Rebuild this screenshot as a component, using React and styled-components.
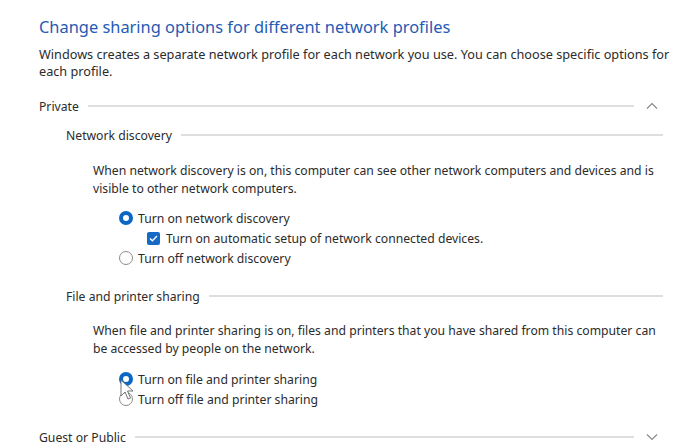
import React from 'react';
import styled, { createGlobalStyle } from 'styled-components';

const GlobalStyle = createGlobalStyle`
  body {
    margin: 0;
    background: #fff;
    font-family: 'Noto Sans', 'Liberation Sans', sans-serif;
    color: #2b2b2b;
  }
`;

const Page = styled.div`
  position: relative;
  width: 691px;
  height: 448px;
  overflow: hidden;
  padding: 15px 0 0 39px;
  box-sizing: border-box;
`;

const Title = styled.h1`
  margin: 0;
  font-size: 16.4px;
  font-weight: 400;
  color: #1f5bb4;
  line-height: 24px;
`;

const Intro = styled.p`
  margin: 7px 0 0;
  width: 645px;
  font-size: 12.7px;
  line-height: 17px;
`;

const Header = styled.div`
  display: flex;
  align-items: center;
  height: 20px;
  margin-top: ${({ top }) => top}px;
  margin-left: ${({ indent }) => indent}px;
  width: ${({ width }) => width}px;
  font-size: 12.2px;
`;

const Rule = styled.div`
  flex: 1;
  height: 2px;
  background: #dedede;
  margin-left: 9px;
`;

const Chevron = styled.svg`
  width: 12px;
  height: 8px;
  margin-left: 12px;
  flex: none;
`;

const Body = styled.p`
  margin: ${({ top }) => top}px 0 0 54px;
  width: 580px;
  font-size: 12.2px;
  line-height: 17.5px;
`;

const Options = styled.div`
  display: flex;
  flex-direction: column;
  margin: ${({ top }) => top}px 0 0 80px;
`;

const Option = styled.label`
  display: flex;
  align-items: center;
  height: 20px;
  font-size: 12.2px;
  margin-left: ${({ indent }) => indent || 0}px;
`;

const Radio = styled.span`
  box-sizing: border-box;
  width: 14px;
  height: 14px;
  border-radius: 50%;
  margin-right: 5px;
  flex: none;
  border: ${({ on }) => (on ? '4px solid #0a67c4' : '1px solid #8c8c8c')};
  background: #fff;
`;

const Check = styled.span`
  box-sizing: border-box;
  width: 13px;
  height: 13px;
  border-radius: 2px;
  margin-right: 6px;
  flex: none;
  background: #1769c6;
  display: flex;
  align-items: center;
  justify-content: center;
`;

const Cursor = styled.svg`
  position: absolute;
  left: 120px;
  top: 379px;
  width: 14px;
  height: 22px;
`;

const Up = () => (
  <Chevron viewBox="0 0 12 8">
    <path d="M1 6.5 L6 1.5 L11 6.5" fill="none" stroke="#8a8a8a" strokeWidth="1.2" />
  </Chevron>
);

const Down = () => (
  <Chevron viewBox="0 0 12 8">
    <path d="M1 1.5 L6 6.5 L11 1.5" fill="none" stroke="#8a8a8a" strokeWidth="1.2" />
  </Chevron>
);

export default function App() {
  return (
    <>
      <GlobalStyle />
      <Page>
        <Title>Change sharing options for different network profiles</Title>
        <Intro>
          Windows creates a separate network profile for each network you use. You can choose specific options for
          each profile.
        </Intro>

        <Header top={16} indent={0} width={619}>
          Private
          <Rule />
          <Up />
        </Header>

        <Header top={9} indent={27} width={597}>
          Network discovery
          <Rule />
        </Header>

        <Body top={17}>
          When network discovery is on, this computer can see other network computers and devices and is
          visible to other network computers.
        </Body>

        <Options top={11}>
          <Option>
            <Radio on />
            Turn on network discovery
          </Option>
          <Option indent={28}>
            <Check>
              <svg width="9" height="7" viewBox="0 0 9 7">
                <path d="M1 3.5 L3.4 5.8 L8 1" fill="none" stroke="#fff" strokeWidth="1.3" />
              </svg>
            </Check>
            Turn on automatic setup of network connected devices.
          </Option>
          <Option>
            <Radio />
            Turn off network discovery
          </Option>
        </Options>

        <Header top={18} indent={27} width={597}>
          File and printer sharing
          <Rule />
        </Header>

        <Body top={16}>
          When file and printer sharing is on, files and printers that you have shared from this computer can
          be accessed by people on the network.
        </Body>

        <Options top={12}>
          <Option>
            <Radio on />
            Turn on file and printer sharing
          </Option>
          <Option>
            <Radio />
            Turn off file and printer sharing
          </Option>
        </Options>

        <Header top={18} indent={0} width={619}>
          Guest or Public
          <Rule />
          <Down />
        </Header>

        <Cursor viewBox="0 0 14 22">
          <path d="M1 1 L1 17 L5 13 L8 20 L10.5 19 L7.5 12 L13 12 Z" fill="#fff" stroke="#666" strokeWidth="0.9" strokeLinejoin="round" />
        </Cursor>
      </Page>
    </>
  );
}
